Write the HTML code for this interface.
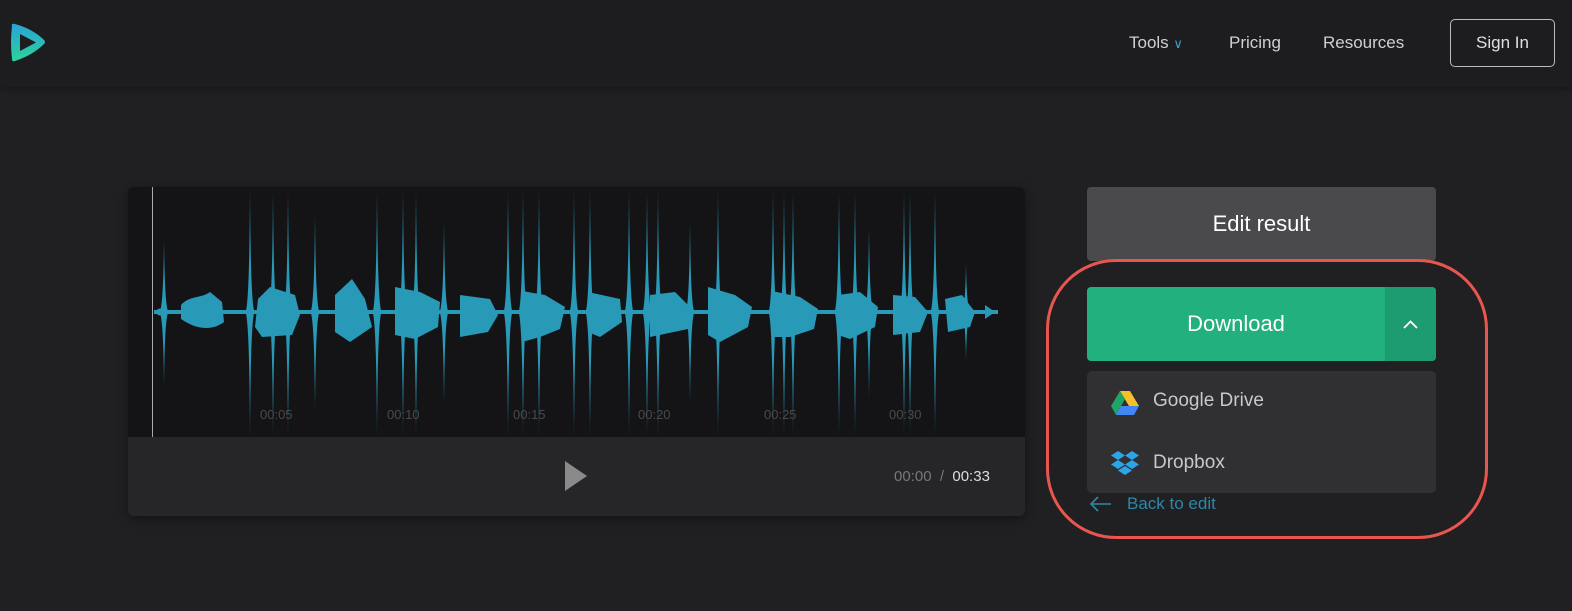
<!DOCTYPE html>
<html><head><meta charset="utf-8"><style>
*{margin:0;padding:0;box-sizing:border-box}
body{width:1572px;height:611px;background:#202022;font-family:"Liberation Sans",sans-serif;position:relative;overflow:hidden;color:#ddd}
.hdr{position:absolute;left:0;top:0;width:1572px;height:87px;background:#1d1d1f;box-shadow:0 2px 6px rgba(0,0,0,.3)}
.nav{position:absolute;top:33px;font-size:17px;color:#d0d0d0}
.sign{position:absolute;left:1450px;top:19px;width:105px;height:48px;border:1px solid #bbb;border-radius:5px;color:#e0e0e0;font-size:17px;text-align:center;line-height:46px}
.wave{position:absolute;left:128px;top:187px;width:897px;height:329px;border-radius:6px;overflow:hidden;background:#262628;box-shadow:0 3px 10px rgba(0,0,0,.4)}
.btn{position:absolute;border-radius:4px;text-align:center;color:#fff;font-size:22px}
.dd{position:absolute;left:1087px;top:371px;width:349px;height:122px;background:#303033;border-radius:5px}
.dd div{position:absolute;left:66px;font-size:19px;color:#c8c8c8}
.ring{position:absolute;left:1046px;top:259px;width:442px;height:280px;border:3px solid #e8564f;border-radius:70px}
.tl{position:absolute;font-size:13px;color:#4a4a4a}
</style></head><body>
<div class="hdr">
<svg style="position:absolute;left:9px;top:22px" width="38" height="42" viewBox="0 0 38 42"><defs><linearGradient id="g" x1="0" y1="0" x2="0" y2="1"><stop offset="0" stop-color="#2aa3d6"/><stop offset="1" stop-color="#2bd39a"/></linearGradient></defs><path d="M3 4 Q2 1 6 2 Q24 7 35 18 Q37 20 35 22 Q24 33 6 39 Q3 40 3 37 Q1 20 3 4Z" fill="url(#g)"/><path d="M11 12 L27 20.5 L11 29Z" fill="#1d1d1f"/></svg>
<div class="nav" style="left:1129px">Tools <span style="color:#3aa3c8;font-size:13px">&#8744;</span></div>
<div class="nav" style="left:1229px">Pricing</div>
<div class="nav" style="left:1323px">Resources</div>
<div class="sign">Sign In</div>
</div>
<div class="wave">
<svg width="897" height="250" style="position:absolute;left:0;top:0;background:#141417">
<defs><path id="s" d="M-4.5 0Q-0.6-8 0-122Q0.6-8 4.5 0Q0.6 9 0 123Q-0.6 9-4.5 0Z"/></defs>
<line x1="24.5" y1="0" x2="24.5" y2="250" stroke="#aaa"/>
<g fill="#2899b7" transform="translate(-128,0)">
<rect x="154" y="123" width="844" height="4"/>
<path d="M155 125Q160 118 165 125Q160 132 155 125Z"/>
<path d="M181 118 C190 108 200 112 210 105 L222 115 L224 135 C215 142 200 145 181 132Z"/>
<path d="M258 112 L270 100 L295 108 L300 128 L292 148 L262 150 L255 140Z"/>
<path d="M335 108 L352 92 L365 112 L372 140 L350 155 L335 145Z"/>
<path d="M395 100 L420 105 L440 115 L438 140 L415 152 L395 148Z"/>
<path d="M460 108 L490 112 L498 128 L488 145 L460 150Z"/>
<path d="M522 104 L545 108 L565 120 L560 142 L540 150 L522 155Z"/>
<path d="M588 105 L620 112 L622 135 L600 150 L588 145Z"/>
<path d="M650 108 L675 105 L692 122 L688 142 L650 150Z"/>
<path d="M708 100 L735 108 L752 120 L748 140 L720 155 L708 148Z"/>
<path d="M772 104 L800 110 L818 122 L814 142 L790 150 L772 150Z"/>
<path d="M838 108 L860 105 L878 120 L875 140 L850 152 L838 148Z"/>
<path d="M893 108 L915 110 L928 125 L920 145 L893 148Z"/>
<path d="M945 112 L962 108 L975 125 L970 140 L948 145Z"/>
<path d="M985 118 L995 125 L985 132Z"/>
</g>
<g fill="#2899b7">
<use href="#s" x="122" y="125"/><use href="#s" x="145" y="125"/>
<use href="#s" x="160" y="125"/><use href="#s" x="249" y="125"/><use href="#s" x="275" y="125"/>
<use href="#s" x="288" y="125"/><use href="#s" x="380" y="125"/><use href="#s" x="395" y="125"/>
<use href="#s" x="411" y="125"/><use href="#s" x="446" y="125"/><use href="#s" x="462" y="125"/>
<use href="#s" x="501" y="125"/><use href="#s" x="519" y="125"/><use href="#s" x="530" y="125"/>
<use href="#s" x="590" y="125"/><use href="#s" x="645" y="125"/><use href="#s" x="656" y="125"/>
<use href="#s" x="665" y="125"/><use href="#s" x="711" y="125"/><use href="#s" x="727" y="125"/>
<use href="#s" x="776" y="125"/><use href="#s" x="782" y="125"/><use href="#s" x="807" y="125"/>
<g transform="translate(187,125) scale(1,0.8)"><use href="#s"/></g>
<g transform="translate(316,125) scale(1,0.75)"><use href="#s"/></g>
<g transform="translate(562,125) scale(1,0.75)"><use href="#s"/></g>
<g transform="translate(741,125) scale(1,0.7)"><use href="#s"/></g>
<g transform="translate(838,125) scale(1,0.4)"><use href="#s"/></g>
<g transform="translate(36,125) scale(1,0.6)"><use href="#s"/></g>
</g>
</svg>
<div class="tl" style="left:132px;top:220px">00:05</div>
<div class="tl" style="left:259px;top:220px">00:10</div>
<div class="tl" style="left:385px;top:220px">00:15</div>
<div class="tl" style="left:510px;top:220px">00:20</div>
<div class="tl" style="left:636px;top:220px">00:25</div>
<div class="tl" style="left:761px;top:220px">00:30</div>
<svg style="position:absolute;left:436px;top:274px" width="24" height="30"><path d="M1 0L23 15L1 30Z" fill="#8a8a8a"/></svg>
<div style="position:absolute;left:766px;top:281px;font-size:15px;color:#777">00:00 &nbsp;/ &nbsp;<span style="color:#ddd">00:33</span></div>
</div>
<div class="btn" style="left:1087px;top:187px;width:349px;height:74px;background:#4a4a4c;line-height:74px">Edit result</div>
<div class="btn" style="left:1087px;top:287px;width:349px;height:74px;background:#21b07e;line-height:74px"><span style="position:absolute;left:0;width:298px">Download</span>
<div style="position:absolute;left:298px;top:0;width:51px;height:74px;background:#1e9c71;border-radius:0 4px 4px 0"><svg width="51" height="74"><path d="M19 41L25.5 34.5L32 41" stroke="#fff" stroke-width="1.8" fill="none"/></svg></div></div>
<div class="dd">
<svg style="position:absolute;left:23px;top:19px" width="30" height="26" viewBox="0 0 30 26"><path d="M10 1H20L29 16H19Z" fill="#f6c026"/><path d="M10 1L1 16L6 25L15 9Z" fill="#1fa463"/><path d="M6 25H24L29 16H11Z" fill="#4285f4"/></svg>
<div style="top:19px">Google Drive</div>
<svg style="position:absolute;left:23px;top:80px" width="30" height="26" viewBox="0 0 30 26"><g fill="#2ea4e8"><path d="M8 0L15 4.5L8 9L1 4.5Z"/><path d="M22 0L29 4.5L22 9L15 4.5Z"/><path d="M8 9L15 13.5L8 18L1 13.5Z"/><path d="M22 9L29 13.5L22 18L15 13.5Z"/><path d="M15 15L22 19.5L15 24L8 19.5Z"/></g></svg>
<div style="top:81px">Dropbox</div>
</div>
<svg style="position:absolute;left:1089px;top:496px" width="24" height="16"><path d="M22 8H2M9 1L2 8L9 15" stroke="#2b89a8" stroke-width="1.6" fill="none"/></svg>
<div style="position:absolute;left:1127px;top:494px;font-size:17px;color:#2b89a8">Back to edit</div>
<div class="ring"></div>
</body></html>
